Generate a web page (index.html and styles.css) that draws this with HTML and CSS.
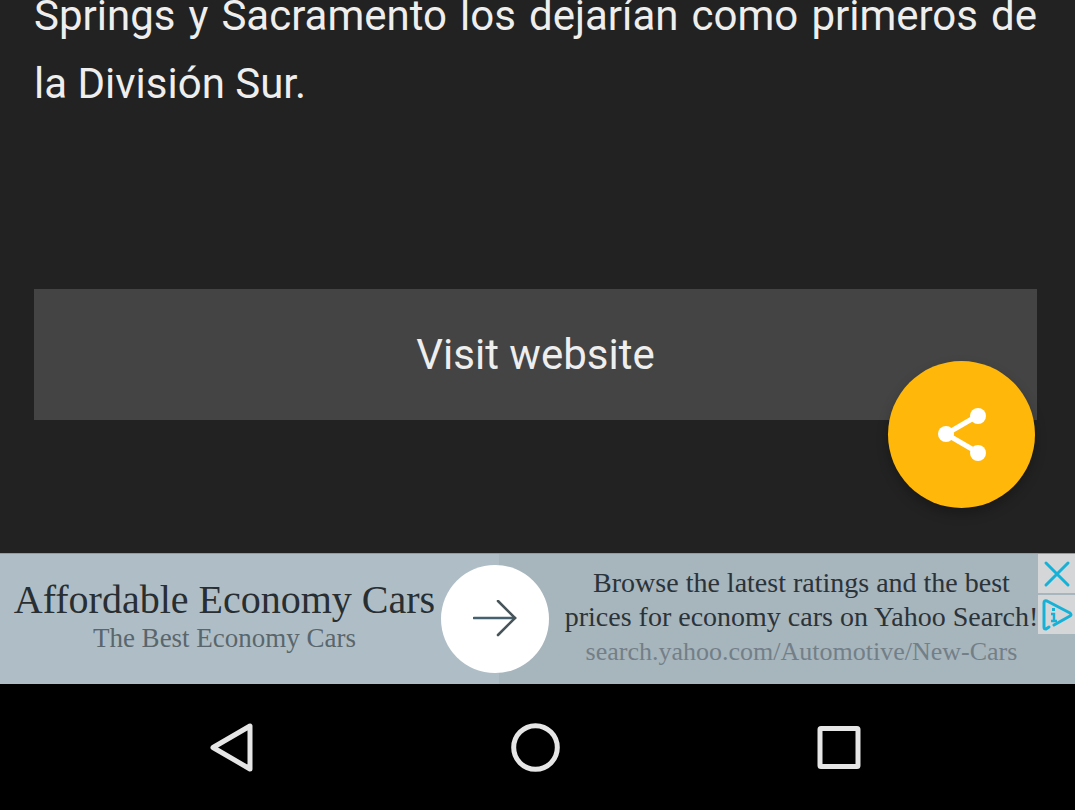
FILE: index.html
```html
<!DOCTYPE html>
<html lang="es">
<head>
<meta charset="utf-8">
<meta name="viewport" content="width=device-width, initial-scale=1">
<title>Noticia</title>
<link rel="stylesheet" href="styles.css">
</head>
<body>
<main class="article">
  <p class="article-text">Springs y Sacramento los dejarían como primeros de la División Sur.</p>
  <button class="visit" type="button">Visit website</button>
  <button class="share" type="button" aria-label="Share">
    <svg class="share-icon" viewBox="0 0 50 54" aria-hidden="true">
      <path d="M40 8 9 26l31 18" fill="none" stroke="#fff" stroke-width="5"/>
      <circle cx="41" cy="8" r="8" fill="#fff"/>
      <circle cx="9" cy="26" r="8" fill="#fff"/>
      <circle cx="41" cy="45" r="8" fill="#fff"/>
    </svg>
  </button>
</main>
<aside class="ad" lang="en">
  <div class="ad-head">
    <a class="ad-title" href="#">Affordable Economy Cars</a>
    <span class="ad-sub">The Best Economy Cars</span>
  </div>
  <button class="ad-go" type="button" aria-label="Open ad">
    <svg class="ad-arrow" viewBox="0 0 44 38" aria-hidden="true">
      <path d="M1 18h41" fill="none" stroke="#456170" stroke-width="2.6" stroke-linecap="round"/>
      <path d="M25 1l17 17-17 17" fill="none" stroke="#47545a" stroke-width="2.6" stroke-linecap="round"/>
    </svg>
  </button>
  <div class="ad-body">
    <span class="ad-copy">Browse the latest ratings and the best<br>prices for economy cars on Yahoo Search!</span>
    <a class="ad-url" href="#">search.yahoo.com/Automotive/New-Cars</a>
  </div>
  <div class="ad-tools">
    <button class="ad-tool" type="button" aria-label="Close ad">
      <svg class="tool-icon" viewBox="0 0 32 32" aria-hidden="true">
        <path d="M5 5l22 22M27 5 5 27" fill="none" stroke="#16b1d6" stroke-width="3" stroke-linecap="round"/>
      </svg>
    </button>
    <button class="ad-tool" type="button" aria-label="Ad choices">
      <svg class="tool-icon" viewBox="0 0 32 32" aria-hidden="true">
        <path d="M8 28l-3 2q-2 0-2-2V4q0-3 3-2l23 12q2 2 0 3L13 26" fill="none" stroke="#16b1d6" stroke-width="3" stroke-linecap="round" stroke-linejoin="round"/>
        <path d="M10 15h3v7M10 22h6" fill="none" stroke="#16b1d6" stroke-width="2.4"/>
        <path d="M11 9h3v3h-3z" fill="#16b1d6"/>
      </svg>
    </button>
  </div>
</aside>
<nav class="system-bar">
  <button class="key" type="button" aria-label="Back">
    <svg class="key-icon" viewBox="0 0 50 50" aria-hidden="true"><path d="M43 4v43L6 25.500z"/></svg>
  </button>
  <button class="key" type="button" aria-label="Home">
    <svg class="key-icon" viewBox="0 0 50 50" aria-hidden="true"><circle cx="25.500" cy="25.500" r="21.800"/></svg>
  </button>
  <button class="key" type="button" aria-label="Recent apps">
    <svg class="key-icon" viewBox="0 0 50 50" aria-hidden="true"><rect x="6" y="6.500" width="38" height="38" rx="1"/></svg>
  </button>
</nav>
</body>
</html>
```
FILE: styles.css
```css
* {
  box-sizing: border-box;
}

body {
  display: flex;
  flex-direction: column;
  height: 100vh;
  margin: 0;
  overflow: hidden;
  background: #222;
  font-family: Roboto, "Liberation Sans", sans-serif;
}

button {
  padding: 0;
  border: 0;
  font: inherit;
  cursor: pointer;
}

a {
  text-decoration: none;
}

svg {
  display: block;
}

/* The article is scrolled to its end, so content is anchored to the bottom. */
.article {
  position: relative;
  display: flex;
  flex: 1;
  flex-direction: column;
  justify-content: flex-end;
  gap: 171px;
  min-height: 0;
  padding: 0 38px 133px 34px;
  color: #eee;
  font-size: 42px;
  line-height: 67px;
}

.article-text {
  margin: 0;
  line-height: 68px;
  text-align: justify;
}

.visit {
  padding: 32px;
  background: #444;
  color: #eee;
}

.share {
  position: absolute;
  right: 40px;
  bottom: 45px;
  display: grid;
  place-items: center;
  width: 147px;
  height: 147px;
  border-radius: 50%;
  background: #ffb80a;
  box-shadow: 0 6px 12px rgba(0, 0, 0, 0.25);
}

.share-icon {
  width: 50px;
}

.ad {
  display: grid;
  grid-template-columns: minmax(0, 441fr) 108px minmax(0, 489fr) 37px;
  align-items: center;
  min-height: 131px;
  border-top: 1px solid #8f9ca2;
  background: linear-gradient(90deg, #afbec6 46.4%, #a7b5bd 46.4%);
  font-family: "Liberation Serif", serif;
  text-align: center;
  white-space: nowrap;
}

.ad-head,
.ad-body {
  display: flex;
  flex-direction: column;
  align-items: center;
}

.ad-head {
  padding: 0 0 4px 8px;
}

.ad-title {
  color: #282e31;
  font-size: 40px;
  line-height: 42px;
}

.ad-sub {
  color: #5a666d;
  font-size: 27px;
  line-height: 34px;
}

.ad-go {
  display: grid;
  place-items: center;
  height: 108px;
  border-radius: 50%;
  background: #fff;
}

.ad-arrow {
  width: 44px;
}

.ad-body {
  padding: 0 0 2px 16px;
}

.ad-copy {
  color: #2b3338;
  font-size: 28px;
  line-height: 34px;
}

.ad-url {
  color: #737f87;
  font-size: 26px;
  line-height: 36px;
}

.ad-tools {
  display: flex;
  flex-direction: column;
  align-self: start;
  gap: 2px;
}

.ad-tool {
  display: grid;
  place-items: center;
  height: 39px;
  background: #d4d6d8;
}

.tool-icon {
  width: 32px;
}

.system-bar {
  display: grid;
  grid-template-columns: repeat(3, 1fr);
  min-height: 126px;
  padding: 0 84px 0 80px;
  background: #000;
}

.key {
  display: grid;
  place-items: center;
  background: none;
}

.key-icon {
  width: 50px;
  fill: none;
  stroke: #e6e6e6;
  stroke-width: 5;
  stroke-linejoin: round;
}
```
